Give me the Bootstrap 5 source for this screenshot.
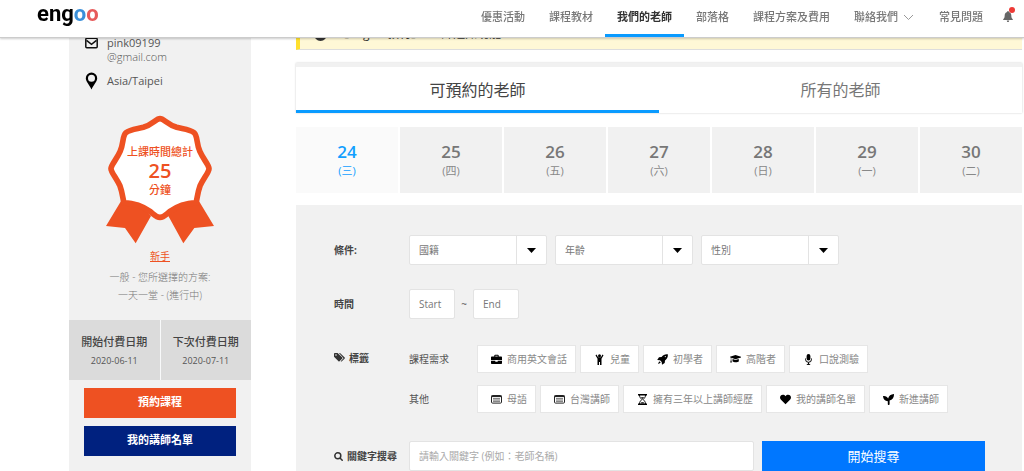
<!DOCTYPE html>
<html lang="zh-Hant">
<head>
<meta charset="utf-8">
<meta name="viewport" content="width=device-width, initial-scale=1">
<title>engoo - 我們的老師</title>
<link href="https://cdn.jsdelivr.net/npm/bootstrap@5.3.0/dist/css/bootstrap.min.css" rel="stylesheet">
<style>
  body { font-family: "Open Sans", "Noto Sans CJK TC", sans-serif; font-size: 10px; line-height: 18px; color: #555; background: #fff; }
  svg { display: block; flex: none; }

  .site-head { min-height: 38px; padding: 0 11px 0 37px; background: #fff; border-bottom: 1px solid #ccc; box-shadow: 0 1px 2px rgba(0,0,0,.2); }
  .logo { font-family: Roboto, sans-serif; font-weight: 700; font-size: 22px; line-height: 28px; color: #000; }
  .logo-blue { color: #3a8fd9; }
  .logo-red { color: #e75b5b; }
  .menu .nav-link { padding: 8px 12px; font-size: 11px; line-height: 18px; font-weight: 500; color: #777; border-bottom: 3px solid transparent; }
  .menu .nav-link.active { color: #333; font-weight: 700; border-color: #0a9bff; }
  .bell { padding: 0 0 4px 8px; }
  .bell-dot { position: absolute; top: -4px; right: -2px; width: 6px; height: 6px; border-radius: 50%; background: #ee3a36; }

  .page { display: grid; grid-template-columns: 182px minmax(0, 1fr); column-gap: 45px; min-height: 100vh; padding: 0 2px 0 69px; }

  .profile { background: #f1f1f1; padding-top: 36px; }
  .contact { padding: 0 16px; font-size: 11px; line-height: 14px; }
  .contact-row { gap: 9px; }
  .medal { width: 108px; margin-top: 24px; }
  .medal-text { top: 0; left: 0; right: 0; padding-top: 31px; color: #ee5122; font-size: 11px; line-height: 14px; font-weight: 500; }
  .medal-num { font-size: 20px; line-height: 24px; font-weight: 600; }
  .level { color: #ee5122; margin-top: 3px; }
  .plan { color: #777; font-weight: 300; margin-top: 3px; }
  .pay { background: #dbdbdb; padding: 12px 0 10px; font-size: 9px; color: #555; }
  .pay-title { font-size: 11px; line-height: 20px; font-weight: 500; color: #444; }
  .acts { padding: 8px 15px; }
  .act { height: 30px; border: 0; border-radius: 0; padding: 0; font-size: 11px; font-weight: 700; color: #fff; }
  .act:hover { color: #fff; }
  .act-orange, .act-orange:hover { background: #ee5122; }
  .act-navy, .act-navy:hover { background: #00217f; }

  .notice { height: 50px; padding: 25px 0 0 14px; gap: 10px; background: #fff8d6; border-left: 4px solid #ffe02e; border-bottom: 1px solid #ddd; font-size: 12px; color: #333; }
  .kind-tabs { margin-top: 13px; border-top: 4px solid #f1f1f1; box-shadow: 0 0 2px rgba(0,0,0,.2); }
  .kind-tabs .nav-link { border-radius: 0; padding: 13px 0 9px; font-size: 16px; line-height: 21px; color: #777; border-bottom: 3px solid transparent; }
  .kind-tabs .nav-link.active { background: none; color: #444; border-color: #0a9bff; }

  .days { display: grid; grid-template-columns: repeat(7, minmax(0, 1fr)); gap: 2px; margin-top: 14px; }
  .day { border: 0; background: #f1f1f1; padding: 15px 0 13px; color: #888; }
  .day-num { font-size: 17px; line-height: 20px; font-weight: 600; color: #777; }
  .day-name { font-size: 11px; line-height: 18px; }
  .day.on { background: #fafafa; }
  .day.on, .day.on .day-num { color: #129fff; }

  .filters { margin-top: 12px; padding: 30px 37px 0 38px; background: #f1f1f1; }
  .f-row { margin-bottom: 24px; }
  .f-label { width: 75px; flex: none; font-weight: 700; color: #444; }
  .f-sub { width: 68px; flex: none; }
  .f-tags { margin-top: 26px; }
  .filters .form-select, .filters .form-control { height: 30px; padding: 0 9px; border: 1px solid #e3e3e3; border-radius: 2px; font-size: 10px; color: #777; }
  .filters .form-select { width: 138px;
    background: #fff url("data:image/svg+xml,%3Csvg xmlns='http://www.w3.org/2000/svg' width='30' height='30'%3E%3Cpath d='M.5 0v30' stroke='%23e3e3e3'/%3E%3Cpath d='M11 12h9l-4.500 5z'/%3E%3C/svg%3E") no-repeat right top; }
  .filters .t-box { width: 46px; }
  .tilde { width: 18px; text-align: center; }
  .filters .form-control::placeholder { color: #777; opacity: 1; }
  .filters .word::placeholder { color: #aaa; }
  .tag { display: flex; align-items: center; gap: 5px; height: 28px; padding: 0 8px 0 13px; border: 1px solid #e6e6e6; background: #fff; color: #888; font-size: 10px; white-space: nowrap; }
  .tag svg { color: #000; }
  .go, .go:hover { width: 223px; height: 30px; flex: none; padding: 0; border: 0; border-radius: 0; background: #0077ff; color: #fff; font-size: 13px; line-height: 18px; }
</style>
</head>
<body class="vh-100 overflow-hidden">

<header class="site-head fixed-top d-flex justify-content-between">
  <a class="logo text-decoration-none" href="#">eng<span class="logo-blue">o</span><span class="logo-red">o</span></a>
  <div class="d-flex align-items-center">
    <nav class="menu nav flex-nowrap">
      <a class="nav-link" href="#">優惠活動</a>
      <a class="nav-link" href="#">課程教材</a>
      <a class="nav-link active" href="#">我們的老師</a>
      <a class="nav-link" href="#">部落格</a>
      <a class="nav-link" href="#">課程方案及費用</a>
      <a class="nav-link d-flex align-items-center gap-1" href="#">聯絡我們
        <svg width="13" height="8" viewBox="0 0 13 8" fill="none" stroke="#999"><path d="M2 2l4.500 4.500L11 2"/></svg></a>
      <a class="nav-link" href="#">常見問題</a>
    </nav>
    <a class="bell" href="#" aria-label="通知"><span class="position-relative d-block">
      <svg width="10" height="11" viewBox="0 0 10 11" fill="#666"><path d="M5 0c.6 0 .9.400.9.900C7.500 1.300 8.300 2.600 8.300 4.200c0 2 .4 3 1.500 4.100v.7H.2v-.7C1.300 7.200 1.700 6.200 1.700 4.200c0-1.600.8-2.900 2.400-3.300C4.100.4 4.400 0 5 0zM3.800 9.500h2.400C6.100 10.500 5.700 11 5 11s-1.100-.5-1.200-1.500z"/></svg>
      <span class="bell-dot"></span></span></a>
  </div>
</header>

<div class="page">
  <aside class="profile">
    <div class="contact">
      <div class="contact-row d-flex">
        <svg width="13" height="14" viewBox="0 0 13 14" fill="none" stroke="#111" stroke-width="1.500"><rect x=".8" y="2.300" width="11.400" height="9.400" rx="1"/><path d="M1.500 4.300l5 4 5-4"/></svg>
        <div>pink09199<br><span class="fw-light">@gmail.com</span></div>
      </div>
      <div class="contact-row d-flex align-items-center mt-2">
        <svg width="13" height="18" viewBox="0 0 13 18"><path fill="#000" fill-rule="evenodd" d="M6.500.5a5.700 5.700 0 0 1 5.700 5.700c0 3.300-3.600 6.300-5.700 11.300C4.400 12.500.8 9.500.8 6.200A5.700 5.700 0 0 1 6.500.5zm0 2.200a3.500 3.500 0 1 0 0 7 3.500 3.500 0 0 0 0-7z"/></svg>
        <div>Asia/Taipei</div>
      </div>
    </div>

    <div class="medal position-relative mx-auto">
      <svg class="w-100" viewBox="138 42 324 389">
        <g fill="#ee5122"><path d="M185 300L138 378l57 6 32 46 46-82-40-48z"/><path d="M415 300l47 78-59 6-33 46-45-82 40-48z"/></g>
        <path fill="#fff" stroke="#ee5122" stroke-width="17" d="M300 56C312 56 322 74 350 82C370 87 390 88 402 98C414 108 408 130 420 155C430 178 447 195 447 206C447 217 430 235 420 258C412 280 412 295 408 308C380 310 350 320 330 334C316 345 312 352 300 352C288 352 284 345 270 334C250 320 220 310 192 308C188 295 188 280 180 258C170 235 153 217 153 206C153 195 170 178 180 155C192 130 186 108 198 98C210 88 230 87 250 82C278 74 288 56 300 56z"/>
      </svg>
      <div class="medal-text position-absolute d-flex flex-column align-items-center">
        <span>上課時間總計</span><span class="medal-num">25</span><span>分鐘</span>
      </div>
    </div>
    <div class="text-center">
      <a class="level d-inline-block" href="#">新手</a>
      <div class="plan">一般 - 您所選擇的方案:<br>一天一堂 - (進行中)</div>
    </div>

    <div class="row g-0 text-center mt-3">
      <div class="col pay border-end border-light"><div class="pay-title">開始付費日期</div>2020-06-11</div>
      <div class="col pay"><div class="pay-title">下次付費日期</div>2020-07-11</div>
    </div>
    <div class="acts d-grid gap-2">
      <button type="button" class="btn act act-orange">預約課程</button>
      <button type="button" class="btn act act-navy">我的講師名單</button>
    </div>
  </aside>

  <main>
    <div class="notice d-flex">
      <svg width="13" height="16" viewBox="0 0 13 16"><circle cx="6.500" cy="9.500" r="6.500" fill="#333"/><path d="M6.500 5v5M6.500 11.500v1" stroke="#fff8d6" stroke-width="2"/></svg>
      <span>【Engoo 教材】&nbsp; 上課通知功能</span>
    </div>

    <nav class="kind-tabs nav nav-justified">
      <a class="nav-link active" href="#">可預約的老師</a>
      <a class="nav-link" href="#">所有的老師</a>
    </nav>

    <div class="days">
      <button type="button" class="day on"><div class="day-num">24</div><div class="day-name">(三)</div></button>
      <button type="button" class="day"><div class="day-num">25</div><div class="day-name">(四)</div></button>
      <button type="button" class="day"><div class="day-num">26</div><div class="day-name">(五)</div></button>
      <button type="button" class="day"><div class="day-num">27</div><div class="day-name">(六)</div></button>
      <button type="button" class="day"><div class="day-num">28</div><div class="day-name">(日)</div></button>
      <button type="button" class="day"><div class="day-num">29</div><div class="day-name">(一)</div></button>
      <button type="button" class="day"><div class="day-num">30</div><div class="day-name">(二)</div></button>
    </div>

    <form class="filters">
      <div class="f-row d-flex align-items-center">
        <label class="f-label" for="country">條件:</label>
        <div class="d-flex gap-2">
          <select id="country" class="form-select"><option>國籍</option></select>
          <select class="form-select" aria-label="年齡"><option>年齡</option></select>
          <select class="form-select" aria-label="性別"><option>性別</option></select>
        </div>
      </div>

      <div class="d-flex align-items-center">
        <label class="f-label" for="start">時間</label>
        <input id="start" class="form-control t-box" type="text" placeholder="Start">
        <span class="tilde">~</span>
        <input class="form-control t-box" type="text" placeholder="End" aria-label="End">
      </div>

      <div class="f-tags d-flex">
        <div class="f-label d-flex gap-1 pt-1">
          <svg class="mt-1" width="11" height="9" viewBox="0 0 11 9" fill="#333"><path d="M0 .8C0 .3.3 0 .8 0h2.800l4.700 4.500c.3.300.3.700 0 1L5.500 8.300c-.3.300-.7.300-1 0L0 3.800zM2 1.200a.8.800 0 1 0 0 1.600.8.800 0 0 0 0-1.600z" fill-rule="evenodd"/><path d="M5 0h1l4.700 4.500c.3.300.3.700 0 1L7.900 8.300c-.4.400-.8.300-1.200 0L9.500 5.200z"/></svg>
          標籤
        </div>
        <div>
          <div class="d-flex align-items-center mb-2 pb-1">
            <div class="f-sub">課程需求</div>
            <div class="d-flex gap-1">
              <button type="button" class="tag"><svg width="11" height="11" viewBox="0 0 11 11" fill="currentColor"><path fill-rule="evenodd" d="M3.300 2.500V1.600c0-.6.300-.9.900-.9h2.600c.6 0 .9.300.9.900v.9H10c.6 0 1 .4 1 1V6H0V3.500c0-.6.4-1 1-1zm1 0h2.400v-.8H4.300zM0 6.700h4.300v1h2.400v-1H11V9c0 .6-.4 1-1 1H1c-.6 0-1-.4-1-1z"/></svg>商用英文會話</button>
              <button type="button" class="tag"><svg width="11" height="11" viewBox="0 0 11 11" fill="currentColor"><circle cx="5.500" cy="1.800" r="1.500"/><path d="M2.500.6l1.600 2.700h2.800L8.500.6l1 .6-2 3.500V11H6V8H5v3H3.500V4.700l-2-3.500z"/></svg>兒童</button>
              <button type="button" class="tag"><svg width="11" height="11" viewBox="0 0 11 11" fill="currentColor"><path fill-rule="evenodd" d="M10.800.2c.3 2.600-.5 4.600-2.800 6.200L7.700 9 5 10.800 4.700 8 3 6.300.2 6 2 3.300l2.600-.3C6.200.7 8.200-.1 10.800.2zM8.300 2a.6.600 0 1 0 0 1.200.6.600 0 0 0 0-1.200zM2.200 7.200l1.600 1.600L1 10z"/></svg>初學者</button>
              <button type="button" class="tag"><svg width="11" height="11" viewBox="0 0 11 11" fill="currentColor"><path d="M5.500 1L11 2.800v.6L5.500 5.200 1.300 3.800V6l.6 2.500H.2L.8 6V3.500L0 3.200v-.4zM2.600 5l2.900 1 3.200-1 .2 2.200C7.600 8.600 4 8.600 2.500 7.200z"/></svg>高階者</button>
              <button type="button" class="tag"><svg width="11" height="11" viewBox="0 0 11 11"><rect x="3.600" y="0" width="3.800" height="6.500" rx="1.900"/><path d="M2.500 4.500v.8a3 3 0 0 0 6 0v-.8M5.500 8.300v2M3.800 10.400h3.400" fill="none" stroke="#000"/></svg>口說測驗</button>
            </div>
          </div>
          <div class="d-flex align-items-center">
            <div class="f-sub">其他</div>
            <div class="d-flex gap-1">
              <button type="button" class="tag"><svg width="11" height="11" viewBox="0 0 11 11"><rect x=".5" y="1.500" width="10" height="7.600" rx="1" fill="none" stroke="#222"/><path d="M.5 2.300h10" stroke="#222" stroke-width="1.600"/><path d="M2 4.600h7M2 6h7M2 7.400h7" stroke="#555" stroke-width=".8"/></svg>母語</button>
              <button type="button" class="tag"><svg width="11" height="11" viewBox="0 0 11 11"><rect x=".5" y="1.500" width="10" height="7.600" rx="1" fill="none" stroke="#222"/><path d="M.5 2.300h10" stroke="#222" stroke-width="1.600"/><path d="M2 4.600h7M2 6h7M2 7.400h7" stroke="#555" stroke-width=".8"/></svg>台灣講師</button>
              <button type="button" class="tag"><svg width="11" height="11" viewBox="0 0 11 11"><path d="M1 .8h9M1 10.200h9" stroke="#000" stroke-width="1.500"/><path d="M2.500 1c0 2.500 1.200 3 2.300 4.500C3.700 7 2.500 7.500 2.500 10M8.500 1c0 2.500-1.200 3-2.300 4.500C7.300 7 8.500 7.500 8.500 10" fill="none" stroke="#000"/><path d="M3.500 9.500C3.700 7.800 7.300 7.800 7.500 9.500zM3.800 3.300h3.400L5.500 5z"/></svg>擁有三年以上講師經歷</button>
              <button type="button" class="tag"><svg width="11" height="11" viewBox="0 0 11 11" fill="currentColor"><path d="M5.500 10.300L1 5.800C-.4 4.300-.2 2.200 1.100 1.300c1.400-1 3.300-.6 4.400.9C6.600.7 8.500.3 9.900 1.300c1.300.9 1.500 3 .1 4.500z"/></svg>我的講師名單</button>
              <button type="button" class="tag"><svg width="11" height="11" viewBox="0 0 11 11" fill="currentColor"><path d="M0 2c2.600-.3 4.200.6 5.100 2.600C5.800 2 7.700.3 11 .1c.1 3.300-1.400 5.700-4.400 6.300V10c0 .6-.4 1-.9 1s-.9-.4-.9-1V7.200C1.900 7.200.2 5.300 0 2z"/></svg>新進講師</button>
            </div>
          </div>
        </div>
      </div>

      <div class="d-flex align-items-center mt-4 pt-1">
        <label class="f-label d-flex align-items-center" for="word">
          <svg class="me-1" width="9" height="9" viewBox="0 0 9 9" fill="none" stroke="#333" stroke-width="1.500"><circle cx="3.800" cy="3.800" r="3"/><path d="M6 6l2.700 2.700"/></svg>關鍵字搜尋</label>
        <div class="d-flex flex-grow-1 gap-2">
          <input id="word" class="form-control word" type="text" placeholder="請輸入關鍵字 (例如：老師名稱)">
          <button type="submit" class="btn go">開始搜尋</button>
        </div>
      </div>
    </form>
  </main>
</div>

<script src="https://cdn.jsdelivr.net/npm/bootstrap@5.3.0/dist/js/bootstrap.bundle.min.js"></script>
</body>
</html>
